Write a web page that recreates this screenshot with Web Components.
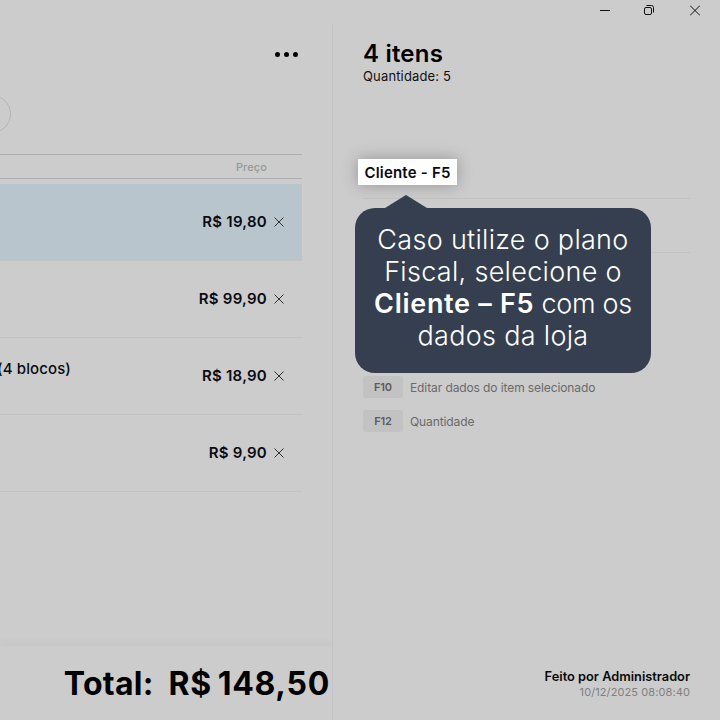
<!DOCTYPE html>
<html lang="pt-BR"><head><meta charset="utf-8"><title>PDV</title>
<style>
html,body{margin:0;padding:0;width:720px;height:720px;overflow:hidden;background:#ccc;font-family:Inter,"Liberation Sans",sans-serif;color:#000}
</style></head><body>
<pos-app>
  <window-bar slot="bar"></window-bar>
  <cart-panel slot="left">
    <cart-row price="R$ 19,80" selected></cart-row>
    <cart-row price="R$ 99,90"></cart-row>
    <cart-row price="R$ 18,90" name="(4 blocos)"></cart-row>
    <cart-row price="R$ 9,90"></cart-row>
  </cart-panel>
  <side-panel slot="right">
    <key-hint k="F10">Editar dados do item selecionado</key-hint>
    <key-hint k="F12">Quantidade</key-hint>
  </side-panel>
</pos-app>
<script>
function def(name,html,init){customElements.define(name,class extends HTMLElement{connectedCallback(){if(this.shadowRoot)return;const r=this.attachShadow({mode:'open'});r.innerHTML=html;if(init)init.call(this,r)}})}
def('pos-app',`<style>
:host{display:flex;flex-direction:column;width:720px;height:720px;overflow:hidden;position:relative}
.main{flex:1;display:flex;min-height:0}
.l{width:332px;flex:none;border-right:1px solid #c3c3c3;display:flex;min-height:0}
.r{flex:1;display:flex;min-width:0}
</style><slot name="bar"></slot><div class="main"><div class="l"><slot name="left"></slot></div><div class="r"><slot name="right"></slot></div></div>`);
def('window-bar',`<style>
:host{display:flex;height:24px;flex:none;justify-content:flex-end;align-items:flex-start;padding-right:20px;gap:34px;box-sizing:border-box}
svg{display:block;width:10px;height:24px;fill:none;stroke:#111;stroke-width:1}
</style>
<svg viewBox="0 0 10 24"><path d="M0 10.5H10"/></svg>
<svg viewBox="0 0 10 24"><rect x=".5" y="7.5" width="7" height="7" rx="1.5"/><path d="M2.5 5.5H7.5Q9.5 5.5 9.5 7.5V12.5"/></svg>
<svg viewBox="0 0 10 24" style="margin-left:2px"><path d="M0 5.5L10 15.5M10 5.5L0 15.5"/></svg>`);
def('cart-panel',`<style>
:host{display:flex;flex-direction:column;width:332px;overflow:hidden;position:relative}
.tools{height:130px;flex:none;box-sizing:border-box;padding:0 34px 0 0;display:flex;flex-direction:column}
.dots{align-self:flex-end;display:flex;gap:4px;margin-top:28px}
.dots i{width:5px;height:5px;border-radius:50%;background:#000}
.circle{width:38px;height:38px;border:1px solid #b4b4b4;border-radius:50%;box-sizing:border-box;margin:38px 0 0 -27px}
.head{margin-right:30px;height:25px;box-sizing:border-box;border-top:1px solid #aeaeae;border-bottom:1px solid #aeaeae;display:flex;justify-content:flex-end;align-items:center;padding-right:35px;font:500 11px Inter,sans-serif;letter-spacing:.1px;color:#989898}
.rows{margin:5px 30px 0 0;display:flex;flex-direction:column;flex:1}
.foot{height:74px;flex:none;box-shadow:0 -5px 7px rgba(0,0,0,.025);display:flex;justify-content:flex-end;align-items:center;gap:15px;padding-right:2px;font:700 32px Inter,sans-serif;letter-spacing:.25px;color:#000;white-space:nowrap;box-sizing:border-box}
.amt{letter-spacing:.7px}
</style>
<div class="tools"><div class="dots"><i></i><i></i><i></i></div><div class="circle"></div></div>
<div class="head">Preço</div>
<div class="rows"><slot></slot></div>
<div class="foot"><span>Total:</span><span class="amt">R$&#8201;148,50</span></div>`);
def('cart-row',`<style>
:host{display:flex;height:77px;box-sizing:border-box;border-bottom:1px solid #c2c2c2;align-items:center;padding-right:18px;font:600 15px Inter,sans-serif;letter-spacing:.25px;color:#0a0a14;position:relative}
:host([selected]){background:#b9c5cc;border-bottom-color:#c2c2c2}
.n{font-weight:500;letter-spacing:.12px;margin:-15px 0 0 -3px;white-space:nowrap}
.p{margin:-2px 0 0 auto}
svg{display:block;width:10px;height:10px;margin-left:7px;fill:none;stroke:#333;stroke-width:1}
</style><span class="n"></span><span class="p"></span><svg viewBox="0 0 10 10"><path d="M.5.5L9.5 9.5M9.5.5L.5 9.5"/></svg>`,function(r){r.querySelector('.n').textContent=this.getAttribute('name')||'';r.querySelector('.p').textContent=this.getAttribute('price')});
def('side-panel',`<style>
:host{display:flex;flex-direction:column;flex:1;box-sizing:border-box;padding:15px 30px 0 30px;position:relative;min-width:0}
h1{margin:0;font:600 24px/29px Inter,sans-serif;letter-spacing:.2px;color:#000}
.q{font:400 13px/16px Inter,sans-serif;letter-spacing:.15px;color:#111}
.sp{height:55px}
.cli{height:26px;margin-bottom:33px}
hr{border:0;border-top:1px solid #c2c2c2;margin:0;height:0}
.gap{height:53px}
.keys{margin-top:123px;display:flex;flex-direction:column;gap:12px}
.foot{margin-top:auto;height:74px;box-sizing:border-box;text-align:right;padding-top:23px}
.by{font:600 12.8px/16px Inter,sans-serif;color:#0a0a0a}
.dt{font:400 11px/15px Inter,sans-serif;color:#808080;letter-spacing:.1px}
.hl{position:absolute;left:25px;top:135px;width:99px;height:26px;background:#fff;box-shadow:0 0 16px rgba(0,0,0,.28);display:flex;align-items:center;justify-content:center;font:600 15px Inter,sans-serif;letter-spacing:.2px;color:#0a0a14;white-space:nowrap;box-sizing:border-box}
tip-bubble{position:absolute;left:22px;top:171px}
</style>
<h1>4 itens</h1><div class="q">Quantidade: 5</div>
<div class="sp"></div><div class="cli"></div><hr><div class="gap"></div><hr>
<div class="keys"><slot></slot></div>
<div class="foot"><div class="by">Feito por Administrador</div><div class="dt">10/12/2025 08:08:40</div></div>
<div class="hl">Cliente - F5</div>
<tip-bubble></tip-bubble>`);
def('key-hint',`<style>
:host{display:flex;align-items:center;gap:7px;height:22px;font:400 12px Inter,sans-serif;letter-spacing:-.1px;color:#6a6a6a}
b{width:40px;height:22px;border-radius:3px;background:#c2c2c2;color:#5c5c5c;font:600 11px Inter,sans-serif;display:flex;align-items:center;justify-content:center}
</style><b></b><span><slot></slot></span>`,function(r){r.querySelector('b').textContent=this.getAttribute('k')});
def('tip-bubble',`<style>
:host{display:block;width:296px}
svg{display:block;margin-left:30px;width:42px;height:13px;fill:#363f4f}
.b{background:#363f4f;border-radius:20px;height:165px;box-sizing:border-box;padding:16px 6px 0;color:#fff;text-align:center;font:300 27px/32px Inter,sans-serif;letter-spacing:.3px}
strong{font-weight:600;letter-spacing:.7px}
span{letter-spacing:-.3px}
</style><svg viewBox="0 0 42 13"><path d="M0 13L21 0L42 13Z"/></svg><div class="b">Caso utilize o plano<br>Fiscal, selecione o<br><strong>Cliente – F5</strong><span> com os</span><br>dados da loja</div>`);
</script>
</body></html>
